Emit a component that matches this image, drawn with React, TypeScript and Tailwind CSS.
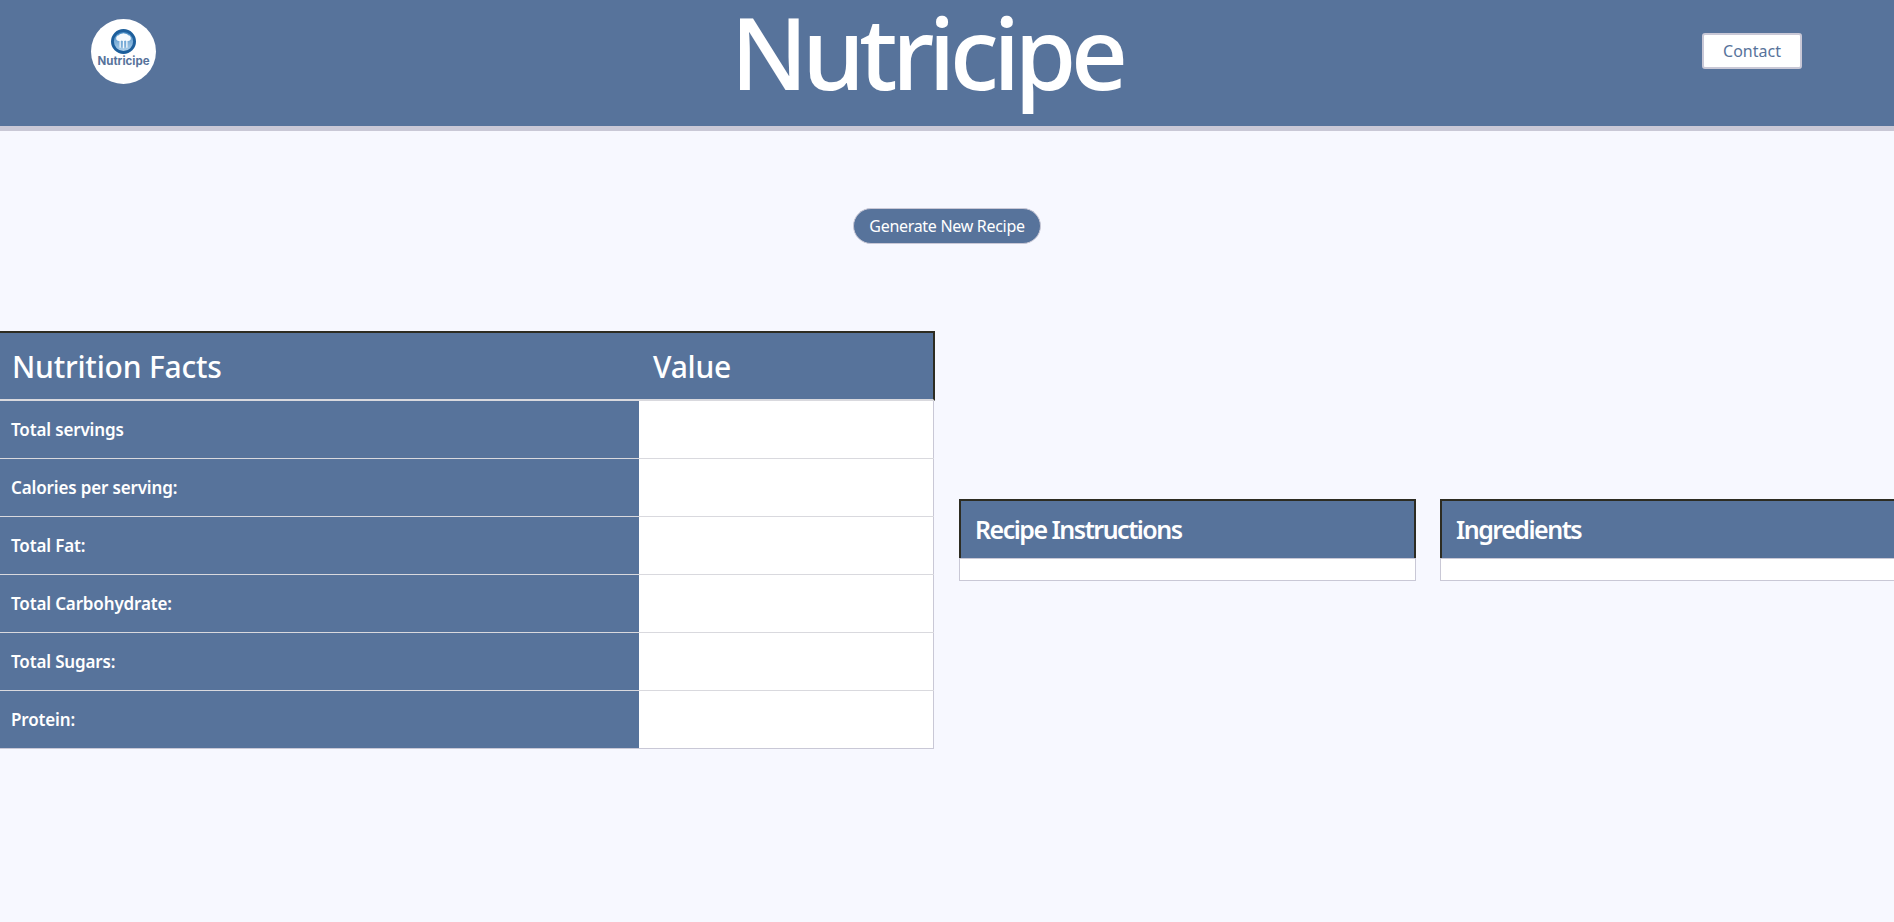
function Logo() {
  return (
    <div className="flex h-[65px] w-[65px] flex-col items-center rounded-full bg-white pt-[10px]">
      <svg width="25" height="25" viewBox="0 0 26 26">
        <defs>
          <linearGradient id="inner" x1="0" y1="0" x2="0" y2="1">
            <stop offset="0%" stopColor="#3f86c2" />
            <stop offset="100%" stopColor="#b5d4ec" />
          </linearGradient>
        </defs>
        <circle cx="13" cy="13" r="11.5" fill="url(#inner)" stroke="#1d5f9c" strokeWidth="3" />
        <path d="M6.5 12a3 3 0 0 1 1.6-5.4 3 3 0 0 1 3-1.6 3.2 3.2 0 0 1 3.8 0 3 3 0 0 1 3 1.6 3 3 0 0 1 1.6 5.4l-1.5.6H8z" fill="#f4f9fd" />
        <path d="M9.5 12v7.5M13 12v8M16.5 12v7.5" stroke="#f4f9fd" strokeWidth="1.3" />
        <path d="M11.2 12v7M14.8 12v7" stroke="#6fa5d3" strokeWidth="0.9" />
      </svg>
      <span className="mt-[1px] text-[11.5px] leading-[12px] font-bold text-[#57739b] [font-family:Inter,sans-serif]">Nutricipe</span>
    </div>
  );
}

function NutritionTable() {
  const rows = ["Total servings", "Calories per serving:", "Total Fat:", "Total Carbohydrate:", "Total Sugars:", "Protein:"];

  return (
    <div className="w-[935px] shrink-0">
      <div className="flex h-[70px] border-t-2 border-r-2 border-b-2 border-t-[#2d2c22] border-r-[#2d2c22] border-b-[#d9d9de] bg-[#57739b] text-[30px] font-medium tracking-[-0.2px] text-white">
        <div className="flex w-[639px] items-center pl-3">Nutrition Facts</div>
        <div className="flex items-center pl-[14px]">Value</div>
      </div>
      {rows.map((row) => (
        <div key={row} className="flex h-[58px] w-[934px] border-b border-[#d9d9de] last:border-[#c9c8d6]">
          <div className="flex w-[639px] items-center bg-[#57739b] pl-[11px] text-[17px] font-semibold tracking-[-0.15px] text-white">{row}</div>
          <div className="flex-1 border-r border-[#c9c8d6] bg-white" />
        </div>
      ))}
    </div>
  );
}

function InfoBox({ title }: { title: string }) {
  return (
    <div className="w-[457px] shrink-0">
      <div className="flex h-[59px] items-center border-x-2 border-t-2 border-[#2d2c22] bg-[#57739b] pl-[14px] text-[25px] font-semibold tracking-[-1.5px] text-white">
        {title}
      </div>
      <div className="h-[23px] border border-[#c9c8d6] bg-white" />
    </div>
  );
}

export default function App() {
  return (
    <div className="h-[922px] w-full overflow-hidden bg-[#f7f8ff] [font-family:'Noto_Sans',sans-serif]">
      <header className="flex h-[131px] items-start justify-between border-b-[5px] border-[#c9c8d6] bg-[#57739b] pr-[92px] pl-[91px]">
        <div className="pt-[19px]">
          <Logo />
        </div>
        <h1 className="mr-[5px] text-[100px] leading-[103px] font-medium tracking-[-5.7px] text-white">Nutricipe</h1>
        <div className="pt-[33px]">
          <button className="h-[36px] w-[100px] rounded-[3px] border-2 border-[#c9c8d6] bg-white text-[16px] text-[#57739b]">Contact</button>
        </div>
      </header>

      <div className="flex justify-center pt-[77px]">
        <button className="h-[36px] w-[188px] rounded-full border border-[#c9c8d6] bg-[#57739b] text-[16px] tracking-[-0.3px] text-white">Generate New Recipe</button>
      </div>

      <div className="mt-[87px] flex items-start gap-[24px]">
        <NutritionTable />
        <div className="mt-[168px] flex gap-[24px]">
          <InfoBox title="Recipe Instructions" />
          <InfoBox title="Ingredients" />
        </div>
      </div>
    </div>
  );
}
